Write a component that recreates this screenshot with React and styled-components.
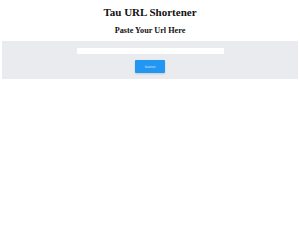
import styled, { createGlobalStyle } from "styled-components";

const GlobalStyle = createGlobalStyle`
  html, body {
    margin: 0;
    padding: 0;
    background: #ffffff;
  }
  body {
    font-family: "Liberation Serif", "DejaVu Serif", serif;
  }
`;

const Page = styled.div`
  display: flex;
  flex-direction: column;
  align-items: center;
  padding-top: 5px;
`;

const Title = styled.h1`
  margin: 0;
  font-size: 11px;
  font-weight: 700;
  color: #111;
  line-height: 14px;
`;

const Subtitle = styled.h2`
  margin: 7px 0 0;
  font-size: 8.2px;
  font-weight: 700;
  color: #111;
  line-height: 10px;
`;

const Panel = styled.form`
  align-self: stretch;
  margin: 5px 2px 0;
  background: #e9ebef;
  display: flex;
  flex-direction: column;
  align-items: center;
  padding: 7px 0 6px;
  gap: 6px;
`;

const UrlInput = styled.input`
  width: 147px;
  height: 6px;
  box-sizing: border-box;
  border: none;
  background: #fff;
  padding: 0;
  outline: none;
`;

const SubmitButton = styled.button`
  width: 30px;
  height: 13px;
  border: none;
  border-radius: 1px;
  background: #2196f3;
  color: #e3f1fd;
  font-family: "DejaVu Sans", sans-serif;
  font-size: 3px;
  padding: 0;
  box-shadow: 0 1px 2px rgba(0, 0, 0, 0.15);
`;

export default function App() {
  return (
    <>
      <GlobalStyle />
      <Page>
        <Title>Tau URL Shortener</Title>
        <Subtitle>Paste Your Url Here</Subtitle>
        <Panel onSubmit={(e) => e.preventDefault()}>
          <UrlInput type="text" />
          <SubmitButton type="submit">Submit</SubmitButton>
        </Panel>
      </Page>
    </>
  );
}
